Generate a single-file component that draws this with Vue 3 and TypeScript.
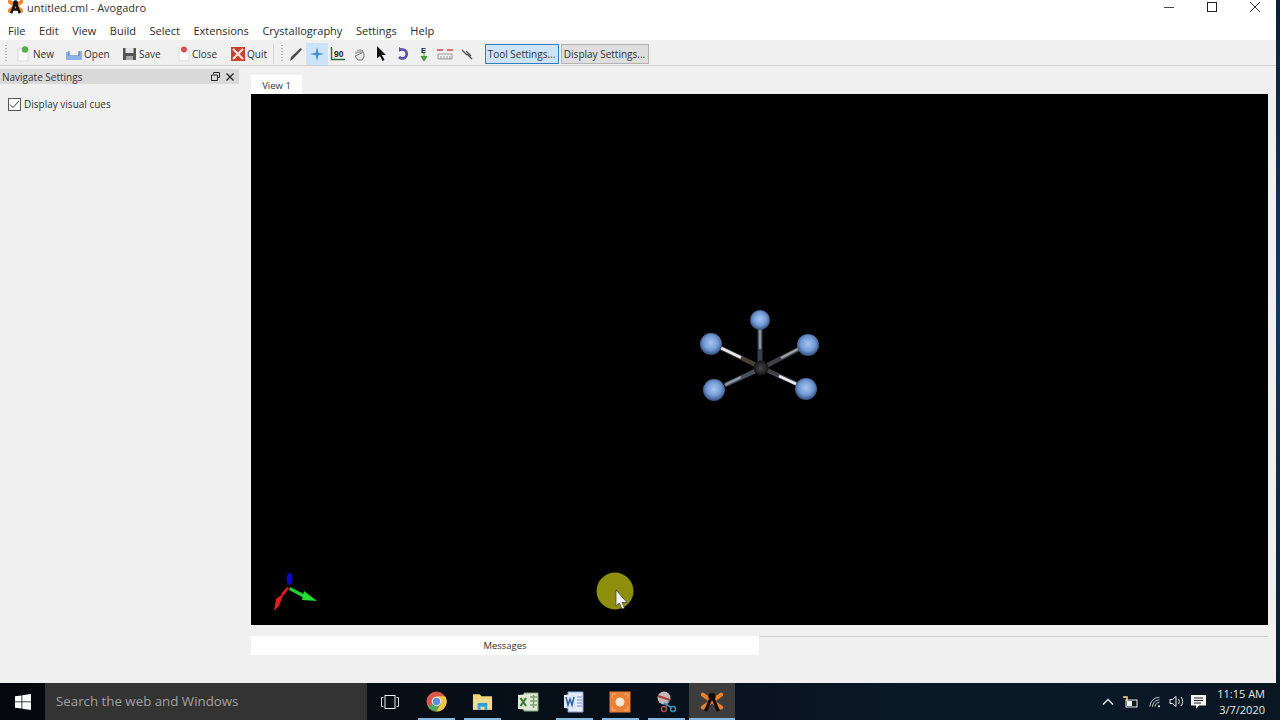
<script setup lang="ts">
const menus: string[] = ['File', 'Edit', 'View', 'Build', 'Select', 'Extensions', 'Crystallography', 'Settings', 'Help']
interface Atom { x: number; y: number; r: number }
const atoms: Atom[] = [
  { x: 509, y: 226, r: 10 },
  { x: 460, y: 250, r: 11 },
  { x: 557, y: 251, r: 11 },
  { x: 463, y: 296, r: 11 },
  { x: 555, y: 295, r: 11 },
]
const taskIcons: { id: string; on: boolean }[] = [
  { id: 'chrome', on: true },
  { id: 'folder', on: true },
  { id: 'excel', on: false },
  { id: 'word', on: true },
  { id: 'rec', on: true },
  { id: 'snip', on: true },
  { id: 'avo', on: true },
]
</script>

<template>
  <div class="screen">
    <div class="window">
      <header class="titlebar">
        <svg class="app-logo" width="15" height="14" viewBox="0 0 24 22">
          <path d="M2 2L22 17M22 2L2 17" stroke="#ee8a32" stroke-width="6" stroke-linecap="round" />
          <path d="M12 4L19 21M12 4L5 21M8 15H16" stroke="#111" stroke-width="4" fill="none" />
          <circle cx="12" cy="4" r="4" fill="#111" />
        </svg>
        <span class="title-text">untitled.cml - Avogadro</span>
        <div class="win-controls">
          <svg width="12" height="12" viewBox="0 0 12 12"><path d="M1 6.500H11" stroke="#444" fill="none" /></svg>
          <svg width="12" height="12" viewBox="0 0 12 12"><rect x="1.500" y="1.500" width="9" height="9" stroke="#222" fill="none" /></svg>
          <svg width="12" height="12" viewBox="0 0 12 12"><path d="M1 1L11 11M11 1L1 11" stroke="#333" fill="none" /></svg>
        </div>
      </header>

      <nav class="menubar">
        <span v-for="m in menus" :key="m">{{ m }}</span>
      </nav>

      <div class="toolbar">
        <span class="grip"></span>
        <div class="tbtn new">
          <svg width="14" height="16" viewBox="0 0 14 16"><path d="M1 3H11V15H1Z" fill="#fbfbfb" stroke="#ddd" /><circle cx="8" cy="3.500" r="3.200" fill="#55b04a" /></svg>
          <span>New</span>
        </div>
        <div class="tbtn open">
          <svg width="16" height="14" viewBox="0 0 16 14"><path d="M0 5H3L4 8H12L13 4H16V13H0Z" fill="#8db4e8" /><path d="M3 4V9M13 4V9" stroke="#4d7cc0" /></svg>
          <span>Open</span>
        </div>
        <div class="tbtn save">
          <svg width="15" height="14" viewBox="0 0 15 14"><path d="M1 1H14V13H1Z" fill="#555" /><rect x="3.500" y="1" width="8" height="5" fill="#e5e5e5" /><rect x="4" y="9" width="7" height="4" fill="#aaa" /></svg>
          <span>Save</span>
        </div>
        <div class="tbtn close">
          <svg width="12" height="16" viewBox="0 0 12 16"><path d="M1 3H11V15H1Z" fill="#fbfbfb" stroke="#ddd" /><circle cx="6" cy="3.500" r="3" fill="#d65050" /></svg>
          <span>Close</span>
        </div>
        <div class="tbtn quit">
          <svg width="14" height="14" viewBox="0 0 14 14"><rect width="14" height="14" fill="#c8402f" /><path d="M2 2L12 12M12 2L2 12" stroke="#f3e4d8" stroke-width="2.200" /></svg>
          <span>Quit</span>
        </div>
        <span class="sep"></span>
        <span class="grip second"></span>
        <div class="ticon">
          <svg width="16" height="16" viewBox="0 0 16 16"><path d="M2 15L3 11L12 2.500C13 1.500 14.500 3 13.500 4L5 13Z" fill="#4a4a4a" /></svg>
        </div>
        <div class="ticon active">
          <svg width="16" height="16" viewBox="0 0 16 16"><path d="M8 1L9.300 6.700L15 8L9.300 9.300L8 15L6.700 9.300L1 8L6.700 6.700Z" fill="#3f8fd6" /></svg>
        </div>
        <div class="ticon">
          <svg width="16" height="14" viewBox="0 0 16 14"><path d="M1.500 0V12.500H15" stroke="#1d6b38" stroke-width="1.400" fill="none" /><text x="4" y="10" class="deg">90</text></svg>
        </div>
        <div class="ticon">
          <svg width="14" height="14" viewBox="0 0 14 14"><path d="M3 7V4.500M5 6V2.500M7 6V2M9 6V3L11 7V10L9 13H5L2 9Z" stroke="#777" fill="#e8e8e8" /></svg>
        </div>
        <div class="ticon">
          <svg width="12" height="15" viewBox="0 0 12 15"><path d="M2 0L11 9H7L9.500 14L7.500 15L5 10L2 12.500Z" fill="#111" /></svg>
        </div>
        <div class="ticon">
          <svg width="14" height="14" viewBox="0 0 14 14"><path d="M4 2.500H7A4.500 4.500 0 1 1 3 10" stroke="#5b4fa8" stroke-width="2.600" fill="none" /><path d="M3 0V5L6.500 2.500Z" fill="#5b4fa8" /></svg>
        </div>
        <div class="ticon">
          <svg width="10" height="16" viewBox="0 0 10 16"><text x="2" y="7" class="e-letter">E</text><path d="M5 7V11M2 10.500H8L5 15Z" fill="#4c9e3c" stroke="#4c9e3c" /></svg>
        </div>
        <div class="ticon">
          <svg width="16" height="12" viewBox="0 0 16 12"><path d="M0 2H6M10 2H16" stroke="#d2443d" stroke-width="1.400" /><path d="M1 6H15M1 6V11H15V6M4 8V11M7 8V11M10 8V11M13 8V11" stroke="#999" fill="none" /></svg>
        </div>
        <div class="ticon">
          <svg width="12" height="12" viewBox="0 0 12 12"><path d="M1 2L6 7M5 3L10 8M6 6L11 11" stroke="#555" stroke-width="1.300" /></svg>
        </div>
        <button class="setbtn on">Tool Settings...</button>
        <button class="setbtn other">Display Settings...</button>
      </div>

      <div class="body">
        <aside class="dock">
          <div class="dock-head">
            <span>Navigate Settings</span>
            <svg class="dock-float" width="9" height="9" viewBox="0 0 9 9"><path d="M2.500 2.500V.5H8.500V5.500H6.500M.5 3H6.500V8.500H.5Z" stroke="#222" fill="none" /></svg>
            <svg class="dock-x" width="8" height="8" viewBox="0 0 8 8"><path d="M.5 .5L7.500 7.500M7.500 .5L.5 7.500" stroke="#222" stroke-width="1.300" /></svg>
          </div>
          <label class="cue">
            <span class="box">
              <svg width="11" height="9" viewBox="0 0 11 9"><path d="M1 4.500L4 7.500L10 1" stroke="#333" fill="none" /></svg>
            </span>
            Display visual cues
          </label>
        </aside>

        <main class="central">
          <div class="tab">View 1</div>
          <div class="viewport">
            <svg class="scene" width="1017" height="531" viewBox="0 0 1017 531">
              <defs>
                <radialGradient id="ball" cx="0.500" cy="0.450" r="0.550">
                  <stop offset="0" stop-color="#a9c7ef" />
                  <stop offset="0.600" stop-color="#7099d4" />
                  <stop offset="1" stop-color="#324b75" />
                </radialGradient>
                <radialGradient id="core" cx="0.500" cy="0.500" r="0.500">
                  <stop offset="0" stop-color="#484848" />
                  <stop offset="1" stop-color="#141414" />
                </radialGradient>
              </defs>
              <g class="molecule">
                <g fill="none" stroke-linecap="butt">
                  <path d="M509 233V273" stroke="#383f4a" stroke-width="5" />
                  <path d="M509 233V255" stroke="#8b96a5" stroke-width="2.500" />
                  <path d="M470 254L511 274" stroke="#46423a" stroke-width="4.500" />
                  <path d="M470 254L490 263.500" stroke="#e6e9ef" stroke-width="2.500" />
                  <path d="M548 255L511 274" stroke="#3e4046" stroke-width="4.500" />
                  <path d="M547 255L530 264" stroke="#9aa0aa" stroke-width="2.500" />
                  <path d="M474 291L511 274" stroke="#4a4f5a" stroke-width="4.500" />
                  <path d="M474 291L490 283" stroke="#8c97aa" stroke-width="2.500" />
                  <path d="M546 290L511 274" stroke="#3f4248" stroke-width="4.500" />
                  <path d="M545 290L528 282" stroke="#e8ebf0" stroke-width="2.500" />
                </g>
                <circle cx="510" cy="274" r="7.500" fill="url(#core)" />
                <circle v-for="(a, i) in atoms" :key="i" :cx="a.x" :cy="a.y" :r="a.r" fill="url(#ball)" />
              </g>
              <g class="axes">
                <ellipse cx="38.500" cy="485" rx="3" ry="6" fill="#0a0ac8" />
                <path d="M38 494L33 501L30 500L36 493Z" fill="#e02020" />
                <path d="M33 499L28 512L23 517L25 505Z" fill="#e02020" />
                <path d="M39 493L55 501L53 504L38 496Z" fill="#20d030" />
                <path d="M53 497L66 507L51 506Z" fill="#20e030" />
              </g>
              <circle cx="364" cy="497" r="18.500" fill="#8f8f0e" />
              <path d="M365 496V512L368.500 509L371 515L373.500 514L371 508.500H376Z" fill="#f4f4f4" stroke="#333" stroke-width=".7" />
            </svg>
          </div>
          <div class="msg-row">
            <div class="msg-tab">Messages</div>
            <div class="msg-rest"></div>
          </div>
        </main>
      </div>
    </div>

    <footer class="taskbar">
      <div class="start">
        <svg width="16" height="16" viewBox="0 0 16 16"><path d="M0 2.300L6.500 1.400V7.500H0ZM7.300 1.300L16 0V7.500H7.300ZM0 8.300H6.500V14.600L0 13.700ZM7.300 8.300H16V16L7.300 14.700Z" fill="#fff" /></svg>
      </div>
      <div class="search">Search the web and Windows</div>
      <div class="task-view">
        <svg width="18" height="14" viewBox="0 0 18 14"><rect x="4" y=".5" width="10" height="13" stroke="#eee" fill="none" /><path d="M2.500 2.500H.5V11.500H2.500M15.500 2.500H17.500V11.500H15.500" stroke="#ddd" fill="none" /></svg>
      </div>
      <div v-for="t in taskIcons" :key="t.id" class="task" :class="{ on: t.on, current: t.id === 'avo' }">
        <svg v-if="t.id === 'chrome'" width="21" height="21" viewBox="0 0 22 22">
          <circle cx="11" cy="11" r="10.500" fill="#d8574a" />
          <path d="M11 11L1.900 16.250A10.500 10.500 0 0 0 11 21.500L16.500 11Z" fill="#55a75a" />
          <path d="M11 5.500H20.100A10.500 10.500 0 0 1 11 21.500L16 12Z" fill="#eec548" />
          <circle cx="11" cy="11" r="5" fill="#eee" /><circle cx="11" cy="11" r="3.800" fill="#5b8fdc" />
        </svg>
        <svg v-else-if="t.id === 'folder'" width="21" height="20" viewBox="0 0 22 20">
          <path d="M1 2H8L10 4H21V18H1Z" fill="#efd279" />
          <path d="M1 7H21V18H1Z" fill="#f2dc93" />
          <path d="M6 18V12H16V18H13V15H9V18Z" fill="#33a8d9" />
          <rect x="6" y="11" width="10" height="2.500" fill="#2f9bd0" />
        </svg>
        <svg v-else-if="t.id === 'excel'" width="22" height="20" viewBox="0 0 22 20">
          <path d="M7 1H21V19H7Z" fill="#dfe9d8" stroke="#86a77c" />
          <path d="M13 5H20M13 9H20M13 13H20M16.500 3V16" stroke="#7fa276" stroke-width="1.500" />
          <path d="M1 3L12 2V18L1 17Z" fill="#dfe9d0" />
          <path d="M3.500 6L9 14M9 6L3.500 14" stroke="#3c7a38" stroke-width="2.200" />
        </svg>
        <svg v-else-if="t.id === 'word'" width="22" height="22" viewBox="0 0 22 22">
          <path d="M5 1H20V21H5Z" fill="#e6ecf7" stroke="#8aa3cf" />
          <path d="M1 4L13 3V18L1 17Z" fill="#dfe7f4" />
          <path d="M3 6L5 14L7 8L9 14L11 6" stroke="#2f5ea8" fill="none" stroke-width="1.500" />
          <path d="M14 6H19M14 9H19M14 12H19M14 15H19" stroke="#6d8fc9" />
        </svg>
        <svg v-else-if="t.id === 'rec'" width="22" height="22" viewBox="0 0 22 22">
          <rect x=".5" y=".5" width="21" height="21" fill="#e98035" />
          <path d="M3 7V3H7M15 3H19V7M3 15V19H7M15 19H19V15" stroke="#f2b184" fill="none" />
          <circle cx="11" cy="11" r="4.500" fill="#f6e6cf" />
        </svg>
        <svg v-else-if="t.id === 'snip'" width="22" height="22" viewBox="0 0 22 22">
          <circle cx="9" cy="7" r="6.500" fill="#c4b8b4" />
          <path d="M3 5L15 9" stroke="#b13a3a" stroke-width="2" />
          <path d="M9 12L17 17M14 10L10 17" stroke="#3f8db3" stroke-width="1.500" />
          <circle cx="18" cy="18" r="2.500" stroke="#3f8db3" fill="none" stroke-width="1.500" />
          <circle cx="9" cy="18" r="2.500" stroke="#a34a4a" fill="none" stroke-width="1.500" />
        </svg>
        <svg v-else width="24" height="20" viewBox="0 0 24 22">
          <path d="M2 3L22 17M22 3L2 17" stroke="#e8812c" stroke-width="4.500" stroke-linecap="round" />
          <path d="M12 4L19 21M12 4L5 21" stroke="#120b06" stroke-width="3.500" fill="none" />
          <circle cx="12" cy="5" r="4" fill="#120b06" />
        </svg>
      </div>
      <div class="tray">
        <svg class="chev" width="12" height="7" viewBox="0 0 12 7"><path d="M1 6.500L6 1.500L11 6.500" stroke="#e8e8e8" stroke-width="1.300" fill="none" /></svg>
        <svg class="batt" width="16" height="12" viewBox="0 0 16 12"><rect x="4" y="4" width="11" height="7" stroke="#eee" fill="none" /><rect x="5" y="5" width="5" height="5" fill="#eee" /><path d="M1 1H5V5" stroke="#f2d884" fill="none" stroke-width="1.500" /></svg>
        <svg class="wifi" width="13" height="12" viewBox="0 0 15 13"><path d="M1 12A11 11 0 0 1 12 1M4 12A8 8 0 0 1 12 4M7 12A5 5 0 0 1 12 7" stroke="#dcdcdc" fill="none" /><circle cx="11.500" cy="11.500" r="1.300" fill="#eee" /></svg>
        <svg width="16" height="13" viewBox="0 0 16 13"><path d="M1 4.500H3.500L7 1.500V11.500L3.500 8.500H1Z" stroke="#eee" fill="none" /><path d="M9.500 4A4 4 0 0 1 9.500 9M12 2A7 7 0 0 1 12 11" stroke="#eee" fill="none" /></svg>
        <svg class="notif" width="15" height="14" viewBox="0 0 15 14"><path d="M0 0H15V10.500H8L5 14V10.500H0Z" fill="#f2f2f2" /><path d="M3 3H12M3 5.500H12M3 8H10" stroke="#222" /></svg>
        <div class="clock"><span>11:15 AM</span><span>3/7/2020</span></div>
      </div>
    </footer>
    <div class="desk-edge"></div>
  </div>
</template>

<style>
html, body { margin: 0; background: #0a1a2a; }
</style>

<style scoped>
.screen {
  position: relative;
  width: 1280px;
  height: 720px;
  display: flex;
  flex-direction: column;
  overflow: hidden;
  font-family: "Open Sans", "Liberation Sans", Arial, sans-serif;
  font-size: 11px;
  color: #2b2b2b;
}
.window {
  width: 1276px;
  height: 683px;
  background: #f0f0f0;
  display: flex;
  flex-direction: column;
}
.desk-edge {
  position: absolute;
  right: 0;
  top: 0;
  width: 4px;
  height: 683px;
  background: linear-gradient(180deg, #0c1f3c, #123a5e 45%, #0d2a44 75%, #0a1a2c);
}
.titlebar {
  height: 20px;
  background: #fff;
  display: flex;
  align-items: center;
  padding-left: 8px;
  flex: none;
}
.app-logo { margin-top: -6px; }
.title-text { margin-left: 4px; margin-top: -6px; font-size: 11px; color: #333; }
.win-controls {
  margin-left: auto;
  margin-top: -6px;
  display: flex;
  gap: 31px;
  padding-right: 15px;
}
.menubar {
  height: 20px;
  background: #fff;
  display: flex;
  align-items: center;
  gap: 13.600px;
  padding-left: 8px;
  font-size: 11px;
  flex: none;
}
.toolbar {
  height: 26px;
  box-sizing: border-box;
  padding: 2px 0 0 5px;
  border-bottom: 1px solid #cfcfcf;
  background: #f0f0f0;
  display: flex;
  align-items: center;
  flex: none;
}
.grip {
  width: 2px;
  height: 18px;
  margin-right: 10px;
  background: repeating-linear-gradient(180deg, #bbb 0 1px, transparent 1px 3px);
}
.grip.second { margin: 0 2px 0 7px; }
.tbtn {
  display: flex;
  align-items: center;
  gap: 2px;
  font-size: 10px;
  color: #333;
}
.tbtn.new { width: 49px; }
.tbtn.open { width: 56px; }
.tbtn.save { width: 54px; }
.tbtn.close { width: 53px; margin-left: 2px; }
.tbtn.quit { width: 43px; }
.sep { width: 1px; height: 20px; background: #d4d4d4; margin-left: -1px; }
.ticon {
  width: 21.400px;
  height: 22px;
  display: flex;
  align-items: center;
  justify-content: center;
  flex: none;
}
.ticon.active { background: #cce4f7; }
.deg { font: bold 8.500px "Liberation Sans", sans-serif; fill: #222; }
.e-letter { font: bold 7.500px "Liberation Sans", sans-serif; fill: #222; }
.setbtn {
  height: 20px;
  padding: 0;
  border: 1px solid #b3b3b3;
  background: #dedede;
  font: 10px "Open Sans", sans-serif;
  color: #333;
  white-space: nowrap;
}
.setbtn.on {
  margin-left: 7px;
  background: #cce4f7;
  border-color: #2f7fc1;
  width: 74px;
}
.setbtn.other { margin-left: 2px; width: 88px; }
.body { flex: 1; display: flex; min-height: 0; }
.dock { width: 239px; flex: none; padding-top: 3px; }
.dock-head {
  height: 15px;
  background: #d9d9d9;
  display: flex;
  align-items: center;
  padding-left: 2px;
  font-size: 10px;
  color: #333;
}
.dock-float { margin-left: auto; }
.dock-x { margin: 0 5px 0 6px; }
.cue {
  display: flex;
  align-items: center;
  gap: 3px;
  margin: 13px 0 0 8px;
  font-size: 10px;
  color: #333;
}
.box {
  width: 13px;
  height: 13px;
  box-sizing: border-box;
  border: 1px solid #555;
  background: #fff;
  display: flex;
  align-items: center;
  justify-content: center;
}
.central {
  margin-left: 12px;
  width: 1017px;
  display: flex;
  flex-direction: column;
  padding-top: 9px;
}
.tab {
  width: 51px;
  height: 19px;
  box-sizing: border-box;
  padding-top: 1px;
  background: #fff;
  display: flex;
  align-items: center;
  justify-content: center;
  font-size: 9.500px;
  color: #333;
  flex: none;
}
.viewport { height: 531px; background: #000; flex: none; line-height: 0; }
.scene { display: block; }
.molecule { filter: blur(.4px); }
.msg-row { display: flex; margin-top: 11px; height: 19px; }
.msg-tab {
  width: 508px;
  background: #fff;
  display: flex;
  align-items: center;
  justify-content: center;
  font-size: 9.500px;
  color: #333;
}
.msg-rest { flex: 1; border-top: 1px solid #d0d0d0; }
.taskbar {
  height: 37px;
  background: linear-gradient(90deg, #04080d 0, #07101a 50%, #0c1a28 75%, #0a1622 100%);
  display: flex;
  align-items: center;
  flex: none;
}
.start {
  width: 45px;
  display: flex;
  justify-content: center;
  align-items: center;
  height: 100%;
}
.search {
  width: 322px;
  height: 100%;
  background: #333;
  color: #a0a0a0;
  font-size: 13.300px;
  line-height: 37px;
  padding-left: 11px;
  box-sizing: border-box;
}
.task-view {
  width: 46px;
  height: 100%;
  display: flex;
  align-items: center;
  justify-content: center;
}
.task {
  width: 46px;
  height: 100%;
  box-sizing: border-box;
  display: flex;
  align-items: center;
  justify-content: center;
}
.task.on {
  background: linear-gradient(#86b7de, #86b7de) bottom center / 37px 2px no-repeat;
}
.task.current {
  background: linear-gradient(#86b7de, #86b7de) bottom center / 100% 2px no-repeat, #3d3d3d;
}
.tray {
  margin-left: auto;
  display: flex;
  align-items: center;
  gap: 6px;
  padding-right: 15px;
  color: #e6e6e6;
}
.chev { margin-right: 2px; }
.batt { margin-right: 5px; }
.wifi { margin-right: 1px; }
.clock {
  display: flex;
  flex-direction: column;
  align-items: flex-end;
  font-size: 11px;
  line-height: 16px;
  margin-left: 5px;
}
</style>
